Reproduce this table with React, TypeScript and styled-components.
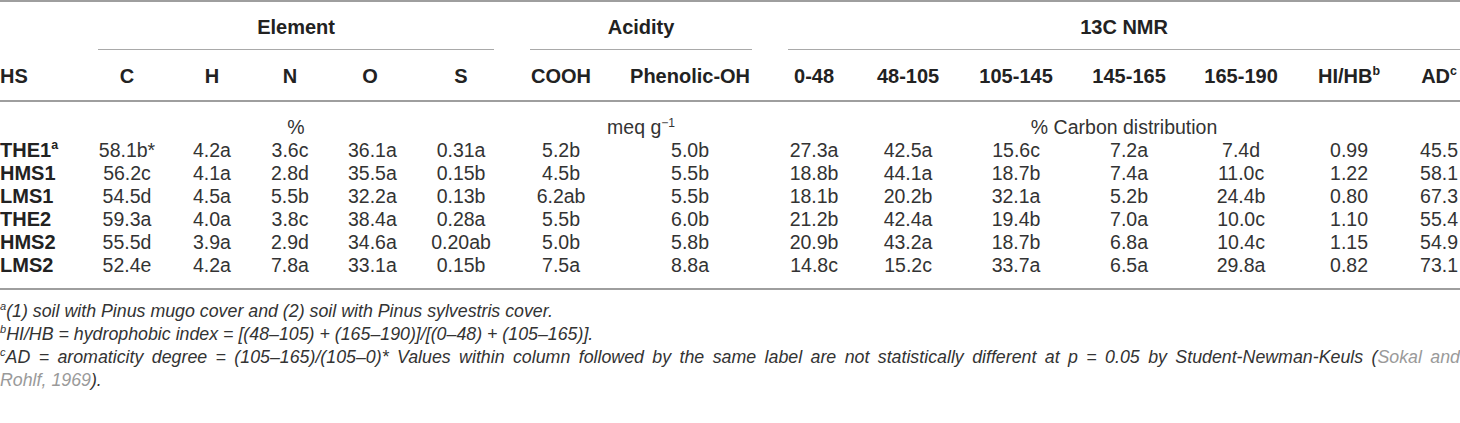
import React from "react";
import styled, { createGlobalStyle } from "styled-components";

const GlobalStyle = createGlobalStyle`
  html, body { margin: 0; padding: 0; background: #ffffff; }
  body {
    font-family: "Liberation Sans", Arial, Helvetica, sans-serif;
    color: #333333;
  }
`;

const Page = styled.div`
  width: 1460px;
`;

const Table = styled.table`
  width: 1460px;
  table-layout: fixed;
  border-collapse: collapse;
  border-top: 2px solid #9e9e9e;
`;

const Col = styled.col<{ $w: number }>`
  width: ${(p) => p.$w}px;
`;

const GroupTh = styled.th<{ $last?: boolean }>`
  padding: 13px ${(p) => (p.$last ? 0 : 18)}px 0 18px;
  font-size: 20px;
  font-weight: 700;
  color: #222222;
  text-align: center;
  vertical-align: top;
`;

const GroupLabel = styled.span`
  display: block;
  line-height: 24px;
  padding-bottom: 10px;
  border-bottom: 1px solid #a9a9a9;
`;

const ColTh = styled.th<{ $first?: boolean; $last?: boolean }>`
  padding: 14px ${(p) => (p.$last ? 0 : 18)}px 12px ${(p) => (p.$first ? 0 : 18)}px;
  font-size: 20px;
  line-height: 24px;
  font-weight: 700;
  color: #222222;
  text-align: ${(p) => (p.$first ? "left" : "center")};
  vertical-align: top;
  border-bottom: 2px solid #9e9e9e;
  white-space: nowrap;
`;

const UnitCell = styled.td<{ $last?: boolean }>`
  padding: 14px ${(p) => (p.$last ? 0 : 18)}px 0 18px;
  font-size: 19.5px;
  line-height: 23px;
  text-align: center;
  vertical-align: top;
  color: #333333;
`;

const Row = styled.tr<{ $end?: boolean }>`
  & > th,
  & > td {
    vertical-align: top;
    padding-bottom: ${(p) => (p.$end ? 11 : 0)}px;
    border-bottom: ${(p) => (p.$end ? "2px solid #9e9e9e" : "none")};
  }
`;

const Label = styled.th`
  padding-top: 0;
  padding-left: 0;
  padding-right: 0;
  font-size: 20px;
  line-height: 23px;
  font-weight: 700;
  color: #222222;
  text-align: left;
`;

const Cell = styled.td<{ $last?: boolean }>`
  padding-top: 0;
  padding-left: 18px;
  padding-right: ${(p) => (p.$last ? 0 : 18)}px;
  font-size: 19.5px;
  line-height: 23px;
  text-align: center;
  color: #333333;
  white-space: nowrap;
`;

const Sup = styled.sup`
  font-size: 0.62em;
  line-height: 0;
  vertical-align: super;
`;

const Notes = styled.div`
  margin-top: 10px;
`;

const Note = styled.p`
  margin: 0;
  font-size: 17.8px;
  line-height: 23px;
  font-style: italic;
  text-align: justify;
  color: #333333;
`;

const Cite = styled.span`
  color: #9a9a9a;
`;

const Keep = styled.span`
  white-space: nowrap;
`;

const widths = [80, 94, 76, 80, 80, 102, 98, 160, 88, 100, 116, 110, 114, 102, 60];

const rows: { name: string; sup?: string; values: string[] }[] = [
  { name: "THE1", sup: "a", values: ["58.1b*", "4.2a", "3.6c", "36.1a", "0.31a", "5.2b", "5.0b", "27.3a", "42.5a", "15.6c", "7.2a", "7.4d", "0.99", "45.5"] },
  { name: "HMS1", values: ["56.2c", "4.1a", "2.8d", "35.5a", "0.15b", "4.5b", "5.5b", "18.8b", "44.1a", "18.7b", "7.4a", "11.0c", "1.22", "58.1"] },
  { name: "LMS1", values: ["54.5d", "4.5a", "5.5b", "32.2a", "0.13b", "6.2ab", "5.5b", "18.1b", "20.2b", "32.1a", "5.2b", "24.4b", "0.80", "67.3"] },
  { name: "THE2", values: ["59.3a", "4.0a", "3.8c", "38.4a", "0.28a", "5.5b", "6.0b", "21.2b", "42.4a", "19.4b", "7.0a", "10.0c", "1.10", "55.4"] },
  { name: "HMS2", values: ["55.5d", "3.9a", "2.9d", "34.6a", "0.20ab", "5.0b", "5.8b", "20.9b", "43.2a", "18.7b", "6.8a", "10.4c", "1.15", "54.9"] },
  { name: "LMS2", values: ["52.4e", "4.2a", "7.8a", "33.1a", "0.15b", "7.5a", "8.8a", "14.8c", "15.2c", "33.7a", "6.5a", "29.8a", "0.82", "73.1"] },
];

const columns: { label: string; sup?: string }[] = [
  { label: "C" },
  { label: "H" },
  { label: "N" },
  { label: "O" },
  { label: "S" },
  { label: "COOH" },
  { label: "Phenolic-OH" },
  { label: "0-48" },
  { label: "48-105" },
  { label: "105-145" },
  { label: "145-165" },
  { label: "165-190" },
  { label: "HI/HB", sup: "b" },
  { label: "AD", sup: "c" },
];

export default function App() {
  return (
    <Page>
      <GlobalStyle />
      <Table>
        <colgroup>
          {widths.map((w, i) => (
            <Col key={i} $w={w} />
          ))}
        </colgroup>
        <thead>
          <tr>
            <th />
            <GroupTh colSpan={5}>
              <GroupLabel>Element</GroupLabel>
            </GroupTh>
            <GroupTh colSpan={2}>
              <GroupLabel>Acidity</GroupLabel>
            </GroupTh>
            <GroupTh colSpan={7} $last>
              <GroupLabel>13C NMR</GroupLabel>
            </GroupTh>
          </tr>
          <tr>
            <ColTh $first>HS</ColTh>
            {columns.map((c, i) => (
              <ColTh key={c.label} $last={i === columns.length - 1}>
                {c.label}
                {c.sup && <Sup>{c.sup}</Sup>}
              </ColTh>
            ))}
          </tr>
        </thead>
        <tbody>
          <tr>
            <td />
            <UnitCell colSpan={5}>%</UnitCell>
            <UnitCell colSpan={2}>
              meq g<Sup>−1</Sup>
            </UnitCell>
            <UnitCell colSpan={7} $last>
              % Carbon distribution
            </UnitCell>
          </tr>
          {rows.map((r, ri) => (
            <Row key={r.name} $end={ri === rows.length - 1}>
              <Label>
                {r.name}
                {r.sup && <Sup>{r.sup}</Sup>}
              </Label>
              {r.values.map((v, i) => (
                <Cell key={i} $last={i === r.values.length - 1}>
                  {v}
                </Cell>
              ))}
            </Row>
          ))}
        </tbody>
      </Table>
      <Notes>
        <Note>
          <Sup>a</Sup>(1) soil with Pinus mugo cover and (2) soil with Pinus sylvestris cover.
        </Note>
        <Note>
          <Sup>b</Sup>HI/HB = hydrophobic index = [(48–105) + (165–190)]/[(0–48) + (105–165)].
        </Note>
        <Note>
          <Sup>c</Sup>AD = aromaticity degree = (105–165)/(105–0)* Values within column followed by the
          same label are not statistically different at p = 0.05 by Student-Newman-Keuls (
          <Cite>Sokal and </Cite>
          <Keep>
            <Cite>Rohlf, 1969</Cite>).
          </Keep>
        </Note>
      </Notes>
    </Page>
  );
}
